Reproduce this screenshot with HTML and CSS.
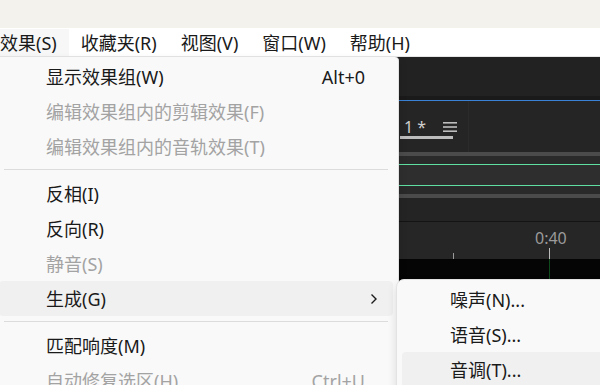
FILE: index.html
```html
<!DOCTYPE html>
<html lang="zh-CN">
<head>
  <meta charset="UTF-8" />
  <title>效果菜单</title>
  <link rel="stylesheet" href="styles.css">
</head>
<body>

  <!-- Window title strip -->
  <div class="titlebar"></div>

  <!-- Menu bar -->
  <nav class="menubar">
    <span class="menubar-item active">效果(S)</span>
    <span class="menubar-item">收藏夹(R)</span>
    <span class="menubar-item">视图(V)</span>
    <span class="menubar-item">窗口(W)</span>
    <span class="menubar-item">帮助(H)</span>
  </nav>

  <!-- Editor area behind the menu -->
  <div class="workspace">
    <div class="panel-header"></div>
    <div class="panel-edge"></div>
    <div class="tab-row">
      <div class="tab">
        <span class="tab-title">1 *</span>
        <span class="tab-menu">
          <svg width="14" height="12" viewBox="0 0 14 12">
            <rect x="0" y="1" width="14" height="1.6" fill="#bdbdbd"/>
            <rect x="0" y="5.2" width="14" height="1.6" fill="#bdbdbd"/>
            <rect x="0" y="9.4" width="14" height="1.6" fill="#bdbdbd"/>
          </svg>
        </span>
      </div>
    </div>
    <div class="track-bar"></div>
    <div class="track-gap"></div>
    <div class="track-line"></div>
    <div class="track-body"></div>
    <div class="track-line"></div>
    <div class="track-gap"></div>
    <div class="track-bar"></div>
    <div class="track-space"></div>
    <div class="ruler">
      <span class="ruler-label">0:40</span>
      <span class="tick small"></span>
      <span class="tick big"></span>
    </div>
    <div class="timeline">
      <span class="playhead"></span>
    </div>

    <!-- Effects dropdown -->
    <div class="menu main-menu">
      <div class="menu-item">
        <span>显示效果组(W)</span>
        <span class="shortcut">Alt+0</span>
      </div>
      <div class="menu-item disabled"><span>编辑效果组内的剪辑效果(F)</span></div>
      <div class="menu-item disabled"><span>编辑效果组内的音轨效果(T)</span></div>
      <div class="separator"></div>
      <div class="menu-item"><span>反相(I)</span></div>
      <div class="menu-item"><span>反向(R)</span></div>
      <div class="menu-item disabled"><span>静音(S)</span></div>
      <div class="menu-item hover">
        <span>生成(G)</span>
        <svg class="chevron" width="8" height="12" viewBox="0 0 8 12">
          <path d="M1.5 1.5 L6 6 L1.5 10.5" fill="none" stroke="#1a1a1a" stroke-width="1.4"/>
        </svg>
      </div>
      <div class="separator"></div>
      <div class="menu-item"><span>匹配响度(M)</span></div>
      <div class="menu-item disabled">
        <span>自动修复选区(H)</span>
        <span class="shortcut">Ctrl+U</span>
      </div>
    </div>

    <!-- Generate submenu -->
    <div class="menu sub-menu">
      <div class="menu-item"><span>噪声(N)...</span></div>
      <div class="menu-item"><span>语音(S)...</span></div>
      <div class="menu-item hover"><span>音调(T)...</span></div>
    </div>
  </div>

</body>
</html>
```

FILE: styles.css
```css
:root {
  --menu-bg: #f9f9f9;
  --menu-border: #e3e3e3;
  --hover-bg: #f0f0f0;
  --text: #1a1a1a;
  --text-disabled: #a3a3a3;
  --green: #5fe0a2;
}

* {
  box-sizing: border-box;
  margin: 0;
  padding: 0;
}

body {
  width: 600px;
  height: 385px;
  overflow: hidden;
  background: #222;
  font-family: "Segoe UI", "Noto Sans", "Noto Sans CJK SC", sans-serif;
  font-size: 18px;
  color: var(--text);
}

.titlebar {
  height: 28px;
  background: #f4f2ed;
}

/* Menu bar */
.menubar {
  display: flex;
  height: 29px;
  margin-left: -12px;
  background: #ffffff;
  border-bottom: 1px solid #e6e6e6;
}

.menubar-item {
  display: flex;
  align-items: center;
  height: 27px;
  margin-top: 1px;
  padding: 0 12px;
  line-height: 1;
  white-space: nowrap;
}

.menubar-item.active {
  background: #f7f7f7;
}

/* Dark editor behind the menu */
.workspace {
  position: relative;
  display: flex;
  flex-direction: column;
  height: 328px;
}

.panel-header { height: 39px; background: #222222; flex: none; }
.panel-edge { height: 5px; background: #1a1a1a; border-bottom: 1px solid #3a82d6; flex: none; }

.tab-row {
  height: 51px;
  background: #252525;
  padding-left: 400px;
  flex: none;
}

.tab {
  display: flex;
  align-items: center;
  gap: 17px;
  width: 69px;
  height: 100%;
  border-right: 1px solid #2b2b2b;
  position: relative;
}

.tab-title {
  margin-left: 4px;
  font-family: "Noto Sans", sans-serif;
  font-size: 16px;
  color: #cfcfcf;
  line-height: 1;
}

.tab-menu {
  display: flex;
}

.tab::after {
  content: "";
  position: absolute;
  left: 0;
  top: 35px;
  width: 53px;
  height: 3px;
  background: #bcbcbc;
}

.track-bar { height: 4px; background: #4b4b4b; flex: none; }
.track-gap { height: 8px; background: #2a2a2a; flex: none; }
.track-line { height: 1px; background: var(--green); flex: none; }
.track-body { height: 20px; background: #2e2e2e; flex: none; }
.track-space { height: 24px; background: #242424; border-bottom: 1px solid #141414; flex: none; }

.ruler {
  position: relative;
  height: 37px;
  background: #262626;
  flex: none;
}

.ruler-label {
  position: absolute;
  left: 535px;
  top: 5px;
  font-family: "Noto Sans", sans-serif;
  font-size: 16px;
  color: #9b9b9b;
}

.tick {
  position: absolute;
  bottom: 0;
  width: 1px;
  background: #9a9a9a;
}

.tick.small { left: 453px; height: 6px; }
.tick.big { left: 549px; height: 11px; background: #bbbbbb; }

.timeline {
  position: relative;
  flex: 1;
  background: #050505;
}

.playhead {
  position: absolute;
  left: 549px;
  top: 0;
  width: 1px;
  height: 22px;
  background: #0f4a1c;
}

/* Menus */
.menu {
  position: absolute;
  background: var(--menu-bg);
  border: 1px solid var(--menu-border);
  border-radius: 8px;
  padding: 2px 5px;
  box-shadow: 0 4px 10px rgba(0, 0, 0, 0.12);
}

.main-menu {
  left: -7px;
  top: 0;
  width: 406px;
  height: 360px;
  border-top: none;
  border-top-left-radius: 0;
  border-top-right-radius: 4px;
}

.sub-menu {
  left: 396px;
  top: 222px;
  width: 220px;
  height: 130px;
  padding-top: 2px;
}

.menu-item {
  display: flex;
  align-items: center;
  justify-content: space-between;
  height: 35px;
  padding: 0 28px 0 47px;
  border-radius: 4px;
  line-height: 1;
  white-space: nowrap;
}

.sub-menu .menu-item {
  padding-left: 48px;
}

.menu-item.disabled {
  color: var(--text-disabled);
}

.menu-item.hover {
  background: var(--hover-bg);
}

.main-menu .menu-item.hover {
  padding-right: 15px;
}

.separator {
  height: 1px;
  margin: 5px 5px 6px 5px;
  background: #dcdcdc;
}
```
